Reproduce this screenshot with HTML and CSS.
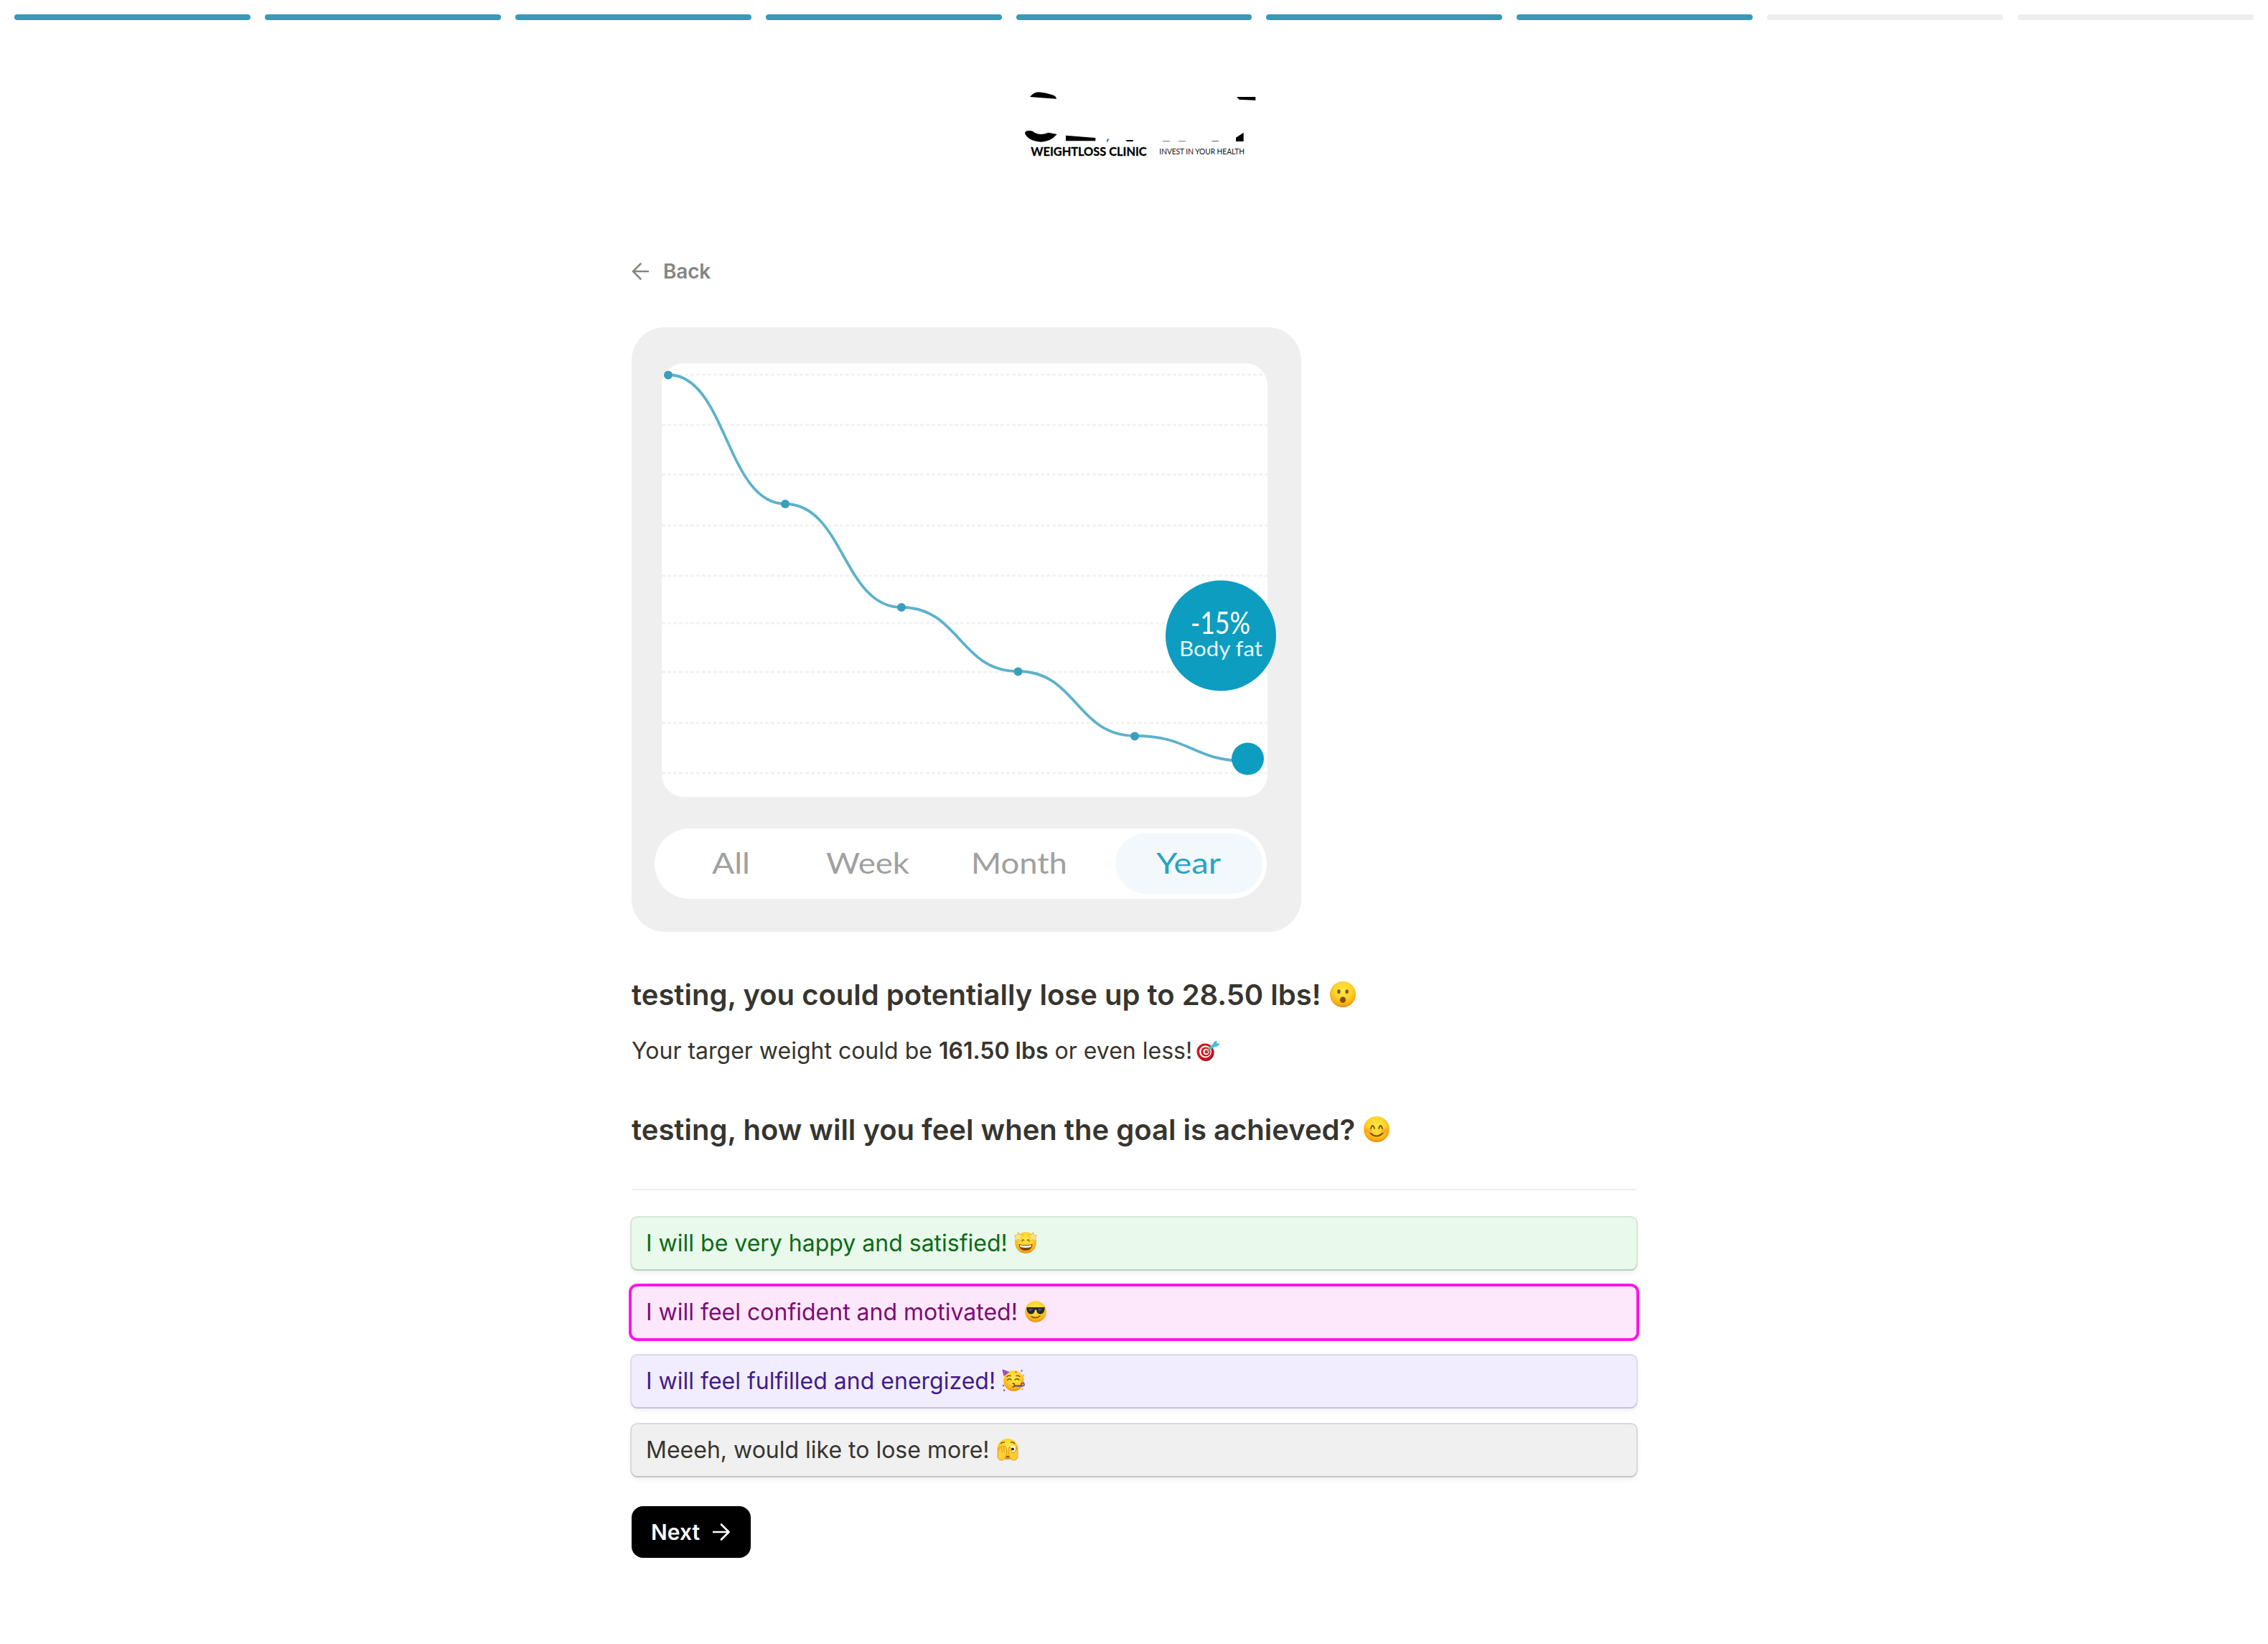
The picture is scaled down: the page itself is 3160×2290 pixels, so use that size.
FILE: index.html
```html
<!DOCTYPE html>
<html lang="en">
<head>
    <meta charset="UTF-8">
    <meta name="viewport" content="width=device-width, initial-scale=1.0">
    <title>Weightloss Clinic</title>
    <link rel="stylesheet" href="styles.css">
</head>
<body>

    <!-- Shared emoji face -->
    <svg class="defs" width="0" height="0">
        <defs>
            <radialGradient id="face" cx="50%" cy="36%" r="66%">
                <stop offset="0" stop-color="#ffe94a"/>
                <stop offset="0.5" stop-color="#ffd42b"/>
                <stop offset="0.82" stop-color="#fdac12"/>
                <stop offset="1" stop-color="#dd7f0c"/>
            </radialGradient>
        </defs>
    </svg>

    <div class="progress">
        <span class="step done"></span>
        <span class="step done"></span>
        <span class="step done"></span>
        <span class="step done"></span>
        <span class="step done"></span>
        <span class="step done"></span>
        <span class="step done"></span>
        <span class="step"></span>
        <span class="step"></span>
    </div>

    <header class="header">
        <svg class="logo" viewBox="0 0 1140 390">
            <path d="M105 75 Q120 56 140 55 Q165 56 206 69 Q215 74 216 83 Z"/>
            <path d="M969 75 H1048 V89 L980 86 Z"/>
            <path d="M84 228 Q84 216 102 216 Q118 216 124 224 Q150 238 182 224 L218 231 Q192 262 150 263 Q100 260 84 228 Z"/>
            <path d="M255 236 L379 246 V259 H255 Z"/>
            <path d="M966 245 L998 224 V261 H966 Z"/>
            <path class="logo-accent" d="M427 252 L437 249 L429 263 H425 Z"/>
            <path d="M505 255 H536 V261 H510 Z"/>
            <path class="logo-faint" d="M660 259 H690 V262 H660 Z M726 259 H756 V262 H726 Z M864 258 H893 V262 H868 Z"/>
            <text class="logo-name" x="109" y="321" textLength="484" lengthAdjust="spacingAndGlyphs">WEIGHTLOSS CLINIC</text>
            <text class="logo-tag" x="646" y="315" textLength="356" lengthAdjust="spacingAndGlyphs">INVEST IN YOUR HEALTH</text>
        </svg>
    </header>

    <main class="container">
        <a class="back" href="#">
            <svg class="arrow" viewBox="0 0 24 24">
                <path d="M2 12 H23.500 M12.500 1.500 L2 12 L12.500 22.500"/>
            </svg>
            Back
        </a>

        <svg class="chart" viewBox="0 0 933 842">
            <rect class="chart-bg" width="933" height="842" rx="46"/>
            <rect class="panel" x="42" y="50" width="844" height="604" rx="31"/>
            <path class="grid" d="M42 66 H886 M42 136 H886 M42 205 H886 M42 276 H886 M42 346 H886 M42 412 H886 M42 480 H886 M42 551 H886 M42 621 H886"/>
            <path class="line" d="M51 66 C132 66 132 246 214 246 C295 246 295 390 376 390 C457 390 457 479 538 479 C620 479 620 569 701 569 C780 569 780 604 858 604"/>
            <g class="dots">
                <circle cx="51" cy="66.500" r="6"/>
                <circle cx="214" cy="246" r="6"/>
                <circle cx="376" cy="390" r="6"/>
                <circle cx="538.500" cy="479.500" r="6"/>
                <circle cx="701" cy="569.500" r="6"/>
            </g>
            <circle class="blob" cx="858.500" cy="601" r="22.500"/>
            <circle class="blob" cx="821" cy="429.500" r="77"/>
            <text class="badge-value" x="779" y="427" textLength="83" lengthAdjust="spacingAndGlyphs">-15%</text>
            <text class="badge-label" x="763" y="457.500" textLength="116" lengthAdjust="spacingAndGlyphs">Body fat</text>

            <rect class="panel" x="32" y="698" width="853" height="98" rx="49"/>
            <rect class="tab-active" x="674" y="705" width="205" height="84" rx="42"/>
            <g class="tabs">
                <text x="112" y="760.500" textLength="53" lengthAdjust="spacingAndGlyphs">All</text>
                <text x="271" y="760.500" textLength="116" lengthAdjust="spacingAndGlyphs">Week</text>
                <text x="473" y="760.500" textLength="134" lengthAdjust="spacingAndGlyphs">Month</text>
                <text class="tab-year" x="731" y="760.500" textLength="90" lengthAdjust="spacingAndGlyphs">Year</text>
            </g>
        </svg>

        <h2 class="title">testing, you could potentially lose up to 28.50 lbs!
            <svg class="emoji emoji-lg" viewBox="0 0 36 36">
                <circle cx="18" cy="18" r="18" fill="url(#face)"/>
                <g fill="#8a5108">
                    <ellipse cx="12.400" cy="14.200" rx="2.200" ry="3"/>
                    <ellipse cx="23.600" cy="14.200" rx="2.200" ry="3"/>
                    <ellipse cx="18" cy="25.800" rx="4.200" ry="4.300"/>
                </g>
            </svg>
        </h2>

        <p class="text">Your targer weight could be <b>161.50 lbs</b> or even less!<svg class="emoji emoji-target" viewBox="0 0 34 32">
                <ellipse cx="13" cy="18" rx="11.500" ry="12" fill="#8e0b16"/>
                <ellipse cx="12" cy="17" rx="11.500" ry="11.500" fill="#d5121f"/>
                <circle cx="12.500" cy="17" r="8.500" fill="#fff"/>
                <circle cx="13" cy="17" r="6.600" fill="#d5121f"/>
                <circle cx="13.500" cy="17" r="4.300" fill="#fff"/>
                <circle cx="14" cy="17" r="2.500" fill="#d5121f"/>
                <path d="M14 17 L19 12" stroke="#c79a3a" stroke-width="2"/>
                <path d="M17.500 13.500 L26 6.500" stroke="#45bcd8" stroke-width="4"/>
                <path d="M22 8 L25 3 L28.500 1.500 L28 5 L33 6 L29 9.500 L23 11 Z" fill="#45bcd8"/>
            </svg></p>

        <h2 class="title question">testing, how will you feel when the goal is achieved?
            <svg class="emoji emoji-lg" viewBox="0 0 36 36">
                <circle cx="18" cy="18" r="18" fill="url(#face)"/>
                <ellipse cx="6.500" cy="20" rx="5" ry="3.500" fill="#ff8a2a" opacity=".45"/>
                <ellipse cx="29.500" cy="20" rx="5" ry="3.500" fill="#ff8a2a" opacity=".45"/>
                <g fill="none" stroke="#7d4607" stroke-width="1.800" stroke-linecap="round">
                    <path d="M10 17 Q12.500 9 15 17"/>
                    <path d="M21 17 Q23.500 9 26 17"/>
                    <path d="M9.500 23.500 Q18 31.500 26.500 23.500"/>
                </g>
            </svg>
        </h2>

        <hr class="divider">

        <div class="options">
            <div class="option green">I will be very happy and satisfied!
                <svg class="emoji" viewBox="0 0 32 32">
                    <circle cx="16" cy="16" r="14.800" fill="url(#face)"/>
                    <path d="M6.500 18 Q16 20.500 25.500 18 Q25 27 16 27 Q7 27 6.500 18 Z" fill="#7d4607"/>
                    <path d="M8 19.200 Q16 21.500 24 19.200 L23.400 22 Q16 24 8.600 22 Z" fill="#fff"/>
                    <path d="M11 14.500 Q12 9.500 14 13.500 M18 13.500 Q20 9.500 21 14.500" fill="none" stroke="#9a5a08" stroke-width="1.300"/>
                    <g fill="#ffe680" stroke="#e0a02a" stroke-width=".7">
                        <path d="M5.500 1.500 L8 5 L13 5.500 L9.500 9 L10.500 14 L6 11.500 L1.500 14 L2.500 9.500 L0.500 6 L4.500 5 Z"/>
                        <path d="M26.500 1.500 L24 5 L19 5.500 L22.500 9 L21.500 14 L26 11.500 L30.500 14 L29.500 9.500 L31.500 6 L27.500 5 Z"/>
                    </g>
                </svg>
            </div>
            <div class="option pink selected">I will feel confident and motivated!
                <svg class="emoji" viewBox="0 0 32 32">
                    <circle cx="16" cy="16" r="14.800" fill="url(#face)"/>
                    <path d="M3.500 10 H28.500 V13 Q27 20 22 19.500 Q17.500 19 17 13.500 H15 Q14.500 19 10 19.500 Q5 20 3.500 13 Z" fill="#26272b"/>
                    <path d="M6 12 L13 12 L8 16 Z M19 12 L26 12 L21 16 Z" fill="#54565c"/>
                    <path d="M10 23 Q17 26.500 22 22" fill="none" stroke="#7d4607" stroke-width="1.500" stroke-linecap="round"/>
                </svg>
            </div>
            <div class="option purple">I will feel fulfilled and energized!
                <svg class="emoji" viewBox="0 0 32 32">
                    <circle cx="16.500" cy="16.500" r="14.300" fill="url(#face)"/>
                    <path d="M0.500 0.500 L10.500 4 L2.500 10 Z" fill="#5b50c8"/>
                    <path d="M4 1.500 L3.500 8.500 M7.500 2.800 L6.500 6.500" stroke="#d654b8" stroke-width="1.500"/>
                    <g fill="none" stroke="#7d4607" stroke-width="1.400" stroke-linecap="round">
                        <path d="M7.500 15.500 Q10 12.500 13 15"/>
                        <path d="M18 15 Q21 12.500 24 15"/>
                        <path d="M7 10.500 Q9 8.500 12 9.500 M20 9.500 Q23 8.500 25 10.500"/>
                        <path d="M15 20 Q19 20 17 22 Q19.500 23.500 15 25"/>
                    </g>
                    <path d="M18 23.500 H28" stroke="#4a3fb5" stroke-width="2"/>
                    <circle cx="29" cy="21.500" r="2.100" fill="none" stroke="#5b50c8" stroke-width="1.600"/>
                    <g fill="#e8384f">
                        <circle cx="19.500" cy="4" r="1.100"/>
                        <circle cx="3" cy="29.500" r="1.300"/>
                    </g>
                    <g fill="#2f7fd6">
                        <circle cx="27.500" cy="2.500" r="1.200"/>
                        <circle cx="2" cy="23" r="1.200"/>
                    </g>
                    <g fill="#f5b52a">
                        <circle cx="30" cy="9" r="1.200"/>
                        <circle cx="28.500" cy="28" r="1.300"/>
                    </g>
                </svg>
            </div>
            <div class="option grey">Meeeh, would like to lose more!
                <svg class="emoji" viewBox="0 0 32 32">
                    <circle cx="16" cy="15.500" r="14.500" fill="url(#face)"/>
                    <path d="M6 8 Q9 5.500 12 6 M20 6 Q24 5.500 26 8" fill="none" stroke="#7d4607" stroke-width="1.400"/>
                    <ellipse cx="23" cy="15" rx="4" ry="4.500" fill="#fff"/>
                    <circle cx="23" cy="15.500" r="2" fill="#3b2206"/>
                    <path d="M12.500 27 Q16 23 19.500 27 Z" fill="#7d4607"/>
                    <g fill="#ffcf36" stroke="#d58a10" stroke-width=".8">
                        <path d="M2 20 L5 13 L7 12.500 L8.500 11 L10.500 11.500 L12.500 11.500 L14 14 L15 19 L13.500 26 Q12 31 7 31 Q2 30.500 2 25 Z"/>
                        <path d="M30 20 L28 13 L26.500 18 L25 20.500 L22 20.500 L20 13 L18 12.500 L17 19 L18.500 26 Q20 31 25 31 Q30 30.500 30 25 Z"/>
                        <path d="M7 13 L8.500 20 M10.500 12 L11.300 20" fill="none"/>
                    </g>
                </svg>
            </div>
        </div>

        <button class="next">
            Next
            <svg class="arrow" viewBox="0 0 24 24">
                <path d="M1 12 H22.500 M12 1.500 L22.500 12 L12 22.500"/>
            </svg>
        </button>
    </main>

</body>
</html>
```
FILE: styles.css
```css
/* Global Styles */
body {
    font-family: Inter, "Liberation Sans", sans-serif;
    margin: 0;
    padding: 0;
    background-color: #fff;
    color: #37352f;
}

.defs {
    display: block;
}

/* Progress Bar */
.progress {
    display: flex;
    gap: 20px;
    padding: 20px 20px 0;
}

.step {
    flex: 1;
    height: 8px;
    border-radius: 4px;
    background-color: #eeeeee;
}

.step.done {
    background-color: #3899b8;
}

/* Header Styles */
.header {
    display: flex;
    justify-content: center;
    padding-top: 82px;
    padding-left: 20px;
}

.logo {
    width: 380px;
    height: 130px;
}

.logo-accent {
    fill: #1c7f96;
}

.logo-faint {
    fill: #777;
}

.logo-name {
    font-family: Lato, sans-serif;
    font-weight: 700;
    font-size: 51px;
    stroke: #000;
    stroke-width: 1;
}

.logo-tag {
    font-family: Lato, sans-serif;
    font-weight: 400;
    font-size: 34px;
    fill: #111;
}

/* Content */
.container {
    width: 1400px;
    margin: 0 auto;
    padding-top: 116px;
}

.back {
    display: flex;
    align-items: center;
    gap: 20px;
    height: 44px;
    color: #868580;
    font-size: 28px;
    font-weight: 600;
    letter-spacing: -0.2px;
    text-decoration: none;
}

.arrow {
    width: 24px;
    height: 24px;
    fill: none;
    stroke: currentColor;
    stroke-width: 2.6;
    stroke-linecap: round;
    stroke-linejoin: round;
}

/* Chart */
.chart {
    display: block;
    width: 933px;
    height: 842px;
    margin-top: 56px;
}

.chart-bg {
    fill: #efefef;
}

.panel {
    fill: #fff;
}

.grid {
    stroke: #f1f2f3;
    stroke-width: 3;
    stroke-dasharray: 5 3;
}

.line {
    fill: none;
    stroke: #5cb2cb;
    stroke-width: 3.8;
}

.dots {
    fill: #3a9fbd;
}

.blob {
    fill: #0d9dc0;
}

.badge-value,
.badge-label,
.tabs {
    font-family: Lato, sans-serif;
}

.badge-value {
    font-size: 42px;
    fill: #fff;
}

.badge-label {
    font-size: 29px;
    fill: #e6f6fa;
}

.tab-active {
    fill: #f2f8fb;
}

.tabs {
    font-size: 41px;
    fill: #a0a0a0;
}

.tab-year {
    fill: #27a3c4;
}

/* Text */
.title {
    margin: 60px 0 0;
    font-size: 40px;
    line-height: 56px;
    font-weight: 600;
}

.text {
    margin: 26px 0 0;
    font-size: 32px;
    line-height: 48px;
}

.text b {
    font-weight: 600;
}

.question {
    margin-top: 58px;
}

.divider {
    height: 2px;
    margin: 54px 0 0;
    border: none;
    background-color: #ededec;
}

.emoji {
    width: 32px;
    height: 32px;
    vertical-align: -4px;
}

.emoji-lg {
    width: 36px;
    height: 36px;
    margin-left: 2px;
    vertical-align: -3px;
}

.emoji-target {
    width: 34px;
    height: 32px;
    margin-left: 6px;
    vertical-align: -5px;
}

/* Options */
.options {
    display: flex;
    flex-direction: column;
    gap: 24px;
    margin-top: 38px;
}

.option {
    height: 72px;
    line-height: 72px;
    padding-left: 20px;
    border-radius: 8px;
    font-size: 32px;
    white-space: nowrap;
}

.green {
    background-color: #e9f9ec;
    color: #0b6b16;
    box-shadow: 0 2px 0 0 #b7d2bc, 0 0 0 2px #d5e5d8, 0 4px 8px rgba(0, 0, 0, 0.08);
}

.pink {
    background-color: #fde8fb;
    color: #7f0a78;
}

.selected {
    box-shadow: 0 0 0 4px #fb14e9;
}

.purple {
    background-color: #f1edfe;
    color: #431c86;
    box-shadow: 0 2px 0 0 #c9bfdf, 0 0 0 2px #dedaeb, 0 4px 8px rgba(0, 0, 0, 0.08);
}

.grey {
    background-color: #f0f0f0;
    color: #37352f;
    box-shadow: 0 2px 0 0 #c4c4c4, 0 0 0 2px #dadada, 0 4px 8px rgba(0, 0, 0, 0.08);
}

/* Next Button */
.next {
    display: flex;
    align-items: center;
    gap: 18px;
    width: 166px;
    height: 72px;
    margin-top: 42px;
    padding: 0 0 0 27px;
    border: none;
    border-radius: 16px;
    background-color: #000;
    color: #fff;
    font-family: inherit;
    font-size: 30px;
    font-weight: 600;
    cursor: pointer;
}
```
